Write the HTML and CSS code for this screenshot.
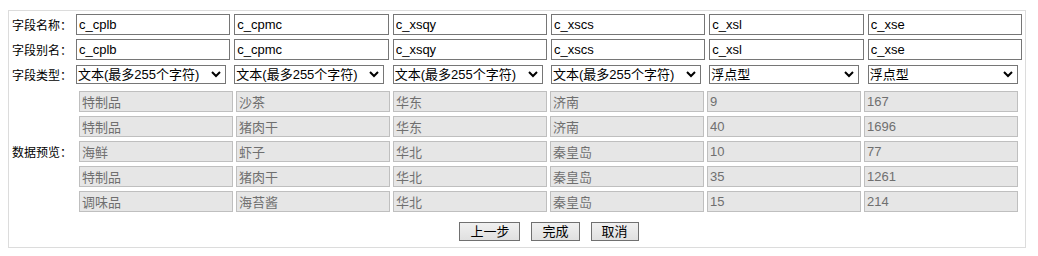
FILE: index.html
```html
<!DOCTYPE html>
<html lang="zh-CN">
<head>
  <meta charset="UTF-8" />
  <title>字段设置</title>
  <link rel="stylesheet" href="styles.css">
</head>
<body>
  <div class="panel">
    <div class="row">
      <span class="lbl">字段名称：</span>
      <div class="fields">
        <input class="txt" value="c_cplb">
        <input class="txt" value="c_cpmc">
        <input class="txt" value="c_xsqy">
        <input class="txt" value="c_xscs">
        <input class="txt" value="c_xsl">
        <input class="txt" value="c_xse">
      </div>
    </div>
    <div class="row">
      <span class="lbl">字段别名：</span>
      <div class="fields">
        <input class="txt" value="c_cplb">
        <input class="txt" value="c_cpmc">
        <input class="txt" value="c_xsqy">
        <input class="txt" value="c_xscs">
        <input class="txt" value="c_xsl">
        <input class="txt" value="c_xse">
      </div>
    </div>
    <div class="row">
      <span class="lbl">字段类型：</span>
      <div class="fields">
        <span class="sel"><select><option>文本(最多255个字符)</option></select><svg viewBox="0 0 10 7"><path d="M1 1 L5 5 L9 1"/></svg></span>
        <span class="sel"><select><option>文本(最多255个字符)</option></select><svg viewBox="0 0 10 7"><path d="M1 1 L5 5 L9 1"/></svg></span>
        <span class="sel"><select><option>文本(最多255个字符)</option></select><svg viewBox="0 0 10 7"><path d="M1 1 L5 5 L9 1"/></svg></span>
        <span class="sel"><select><option>文本(最多255个字符)</option></select><svg viewBox="0 0 10 7"><path d="M1 1 L5 5 L9 1"/></svg></span>
        <span class="sel"><select><option>浮点型</option></select><svg viewBox="0 0 10 7"><path d="M1 1 L5 5 L9 1"/></svg></span>
        <span class="sel"><select><option>浮点型</option></select><svg viewBox="0 0 10 7"><path d="M1 1 L5 5 L9 1"/></svg></span>
      </div>
    </div>
    <div class="row preview-row">
      <span class="lbl">数据预览：</span>
      <div class="preview">
        <input class="pv" disabled value="特制品">
        <input class="pv" disabled value="沙茶">
        <input class="pv" disabled value="华东">
        <input class="pv" disabled value="济南">
        <input class="pv" disabled value="9">
        <input class="pv" disabled value="167">

        <input class="pv" disabled value="特制品">
        <input class="pv" disabled value="猪肉干">
        <input class="pv" disabled value="华东">
        <input class="pv" disabled value="济南">
        <input class="pv" disabled value="40">
        <input class="pv" disabled value="1696">

        <input class="pv" disabled value="海鲜">
        <input class="pv" disabled value="虾子">
        <input class="pv" disabled value="华北">
        <input class="pv" disabled value="秦皇岛">
        <input class="pv" disabled value="10">
        <input class="pv" disabled value="77">

        <input class="pv" disabled value="特制品">
        <input class="pv" disabled value="猪肉干">
        <input class="pv" disabled value="华北">
        <input class="pv" disabled value="秦皇岛">
        <input class="pv" disabled value="35">
        <input class="pv" disabled value="1261">

        <input class="pv" disabled value="调味品">
        <input class="pv" disabled value="海苔酱">
        <input class="pv" disabled value="华北">
        <input class="pv" disabled value="秦皇岛">
        <input class="pv" disabled value="15">
        <input class="pv" disabled value="214">
      </div>
    </div>
    <div class="row actions">
      <span class="lbl"></span>
      <div class="buttons">
        <button class="btn">上一步</button>
        <button class="btn">完成</button>
        <button class="btn">取消</button>
      </div>
    </div>
  </div>
</body>
</html>
```

FILE: styles.css
```css
* { box-sizing: border-box; }

body {
  margin: 0;
  padding: 10px 8px 0;
  font-family: "Liberation Sans", "Noto Sans CJK SC", sans-serif;
  font-size: 13px;
  color: #000;
  background: #fff;
}

.panel {
  width: 1018px;
  border: 1px solid #dcdcdc;
  padding: 3px 0 6px;
}

.row {
  display: flex;
  align-items: center;
}

.row + .row { margin-top: 4px; }

.lbl {
  flex: none;
  width: 67px;
  padding-left: 3px;
  font-size: 12px;
  white-space: nowrap;
}

.fields {
  width: 946px;
  display: grid;
  grid-template-columns: repeat(6, 1fr);
  column-gap: 4px;
}

.txt {
  width: 100%;
  height: 21px;
  margin: 0;
  padding: 0 2px;
  border: 1px solid #767676;
  border-radius: 0;
  font: inherit;
  line-height: 19px;
  color: #000;
  background: #fff;
  outline: none;
}

.sel {
  position: relative;
  display: block;
  width: 150px;
  height: 21px;
  padding-top: 1px;
}

.sel select {
  appearance: none;
  -webkit-appearance: none;
  display: block;
  width: 150px;
  height: 19px;
  margin: 0;
  padding: 0 16px 0 1px;
  border: 1px solid #767676;
  border-radius: 0;
  font: inherit;
  line-height: 17px;
  color: #000;
  background: #fff;
}

.sel svg {
  position: absolute;
  right: 5px;
  top: 7px;
  width: 10px;
  height: 7px;
  fill: none;
  stroke: #000;
  stroke-width: 2;
  pointer-events: none;
}

.preview-row { }
.row.preview-row { margin-top: 6px; }

.preview {
  margin-left: 3px;
  display: grid;
  grid-template-columns: repeat(6, 154px);
  column-gap: 3px;
  row-gap: 4px;
}

.pv {
  width: 154px;
  height: 21px;
  margin: 0;
  padding: 0 2px;
  border: 1px solid #bfbfbf;
  border-radius: 0;
  font: inherit;
  line-height: 19px;
  color: #6f6f6f;
  background: #e6e6e6;
}

.row.actions { margin-top: 10px; }

.buttons {
  width: 946px;
  display: flex;
  justify-content: center;
  gap: 11px;
}

.btn {
  height: 19px;
  margin: 0;
  padding: 0 10px;
  border: 1px solid #707070;
  border-radius: 0;
  font: inherit;
  line-height: 17px;
  color: #000;
  background: linear-gradient(#f0f0f0, #e0e0e0);
  cursor: pointer;
}
```
